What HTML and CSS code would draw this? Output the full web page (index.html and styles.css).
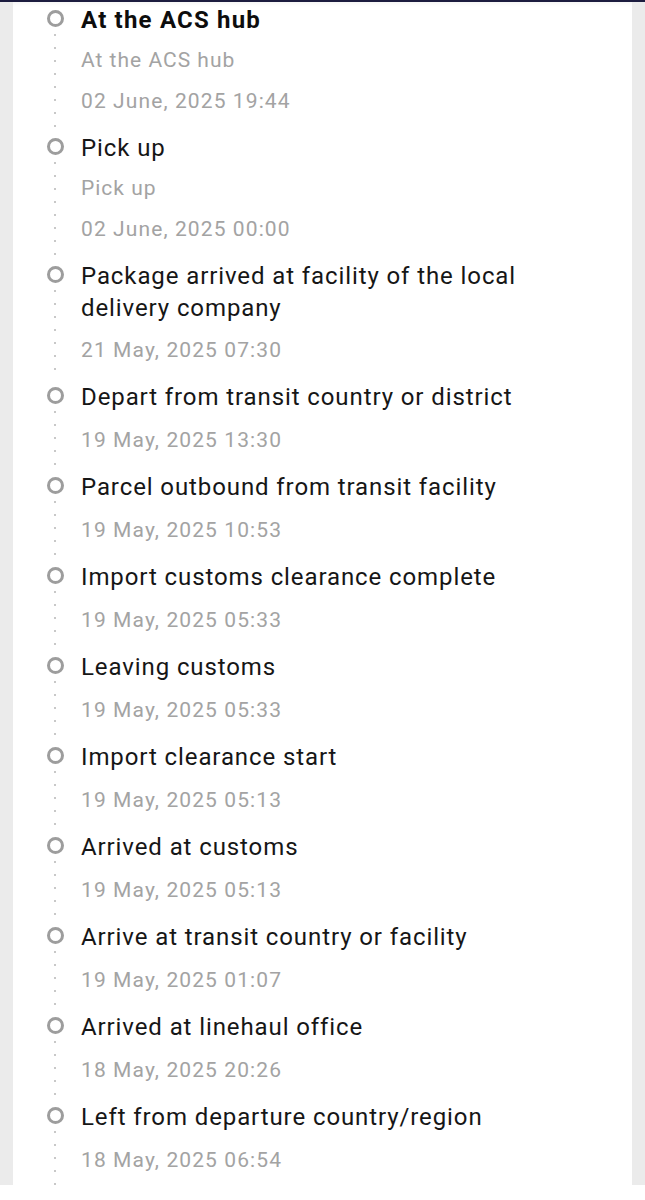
FILE: index.html
```html
<!DOCTYPE html>
<html>
<head>
<meta charset="utf-8">
<link rel="stylesheet" href="styles.css">
</head>
<body>
<div class="topbar"></div>
<div class="page">
  <div class="card">
    <ul class="timeline">
      <li class="event">
        <div class="marker"><span class="ring"></span><span class="dots"></span></div>
        <div class="body">
          <div class="title current">At the ACS hub</div>
          <div class="sub">At the ACS hub</div>
          <div class="date">02 June, 2025 19:44</div>
        </div>
      </li>
      <li class="event">
        <div class="marker"><span class="ring"></span><span class="dots"></span></div>
        <div class="body">
          <div class="title">Pick up</div>
          <div class="sub">Pick up</div>
          <div class="date">02 June, 2025 00:00</div>
        </div>
      </li>
      <li class="event">
        <div class="marker"><span class="ring"></span><span class="dots"></span></div>
        <div class="body">
          <div class="title">Package arrived at facility of the local delivery company</div>
          <div class="date after-wrap">21 May, 2025 07:30</div>
        </div>
      </li>
      <li class="event">
        <div class="marker"><span class="ring"></span><span class="dots"></span></div>
        <div class="body">
          <div class="title">Depart from transit country or district</div>
          <div class="date">19 May, 2025 13:30</div>
        </div>
      </li>
      <li class="event">
        <div class="marker"><span class="ring"></span><span class="dots"></span></div>
        <div class="body">
          <div class="title">Parcel outbound from transit facility</div>
          <div class="date">19 May, 2025 10:53</div>
        </div>
      </li>
      <li class="event">
        <div class="marker"><span class="ring"></span><span class="dots"></span></div>
        <div class="body">
          <div class="title">Import customs clearance complete</div>
          <div class="date">19 May, 2025 05:33</div>
        </div>
      </li>
      <li class="event">
        <div class="marker"><span class="ring"></span><span class="dots"></span></div>
        <div class="body">
          <div class="title">Leaving customs</div>
          <div class="date">19 May, 2025 05:33</div>
        </div>
      </li>
      <li class="event">
        <div class="marker"><span class="ring"></span><span class="dots"></span></div>
        <div class="body">
          <div class="title">Import clearance start</div>
          <div class="date">19 May, 2025 05:13</div>
        </div>
      </li>
      <li class="event">
        <div class="marker"><span class="ring"></span><span class="dots"></span></div>
        <div class="body">
          <div class="title">Arrived at customs</div>
          <div class="date">19 May, 2025 05:13</div>
        </div>
      </li>
      <li class="event">
        <div class="marker"><span class="ring"></span><span class="dots"></span></div>
        <div class="body">
          <div class="title">Arrive at transit country or facility</div>
          <div class="date">19 May, 2025 01:07</div>
        </div>
      </li>
      <li class="event">
        <div class="marker"><span class="ring"></span><span class="dots"></span></div>
        <div class="body">
          <div class="title">Arrived at linehaul office</div>
          <div class="date">18 May, 2025 20:26</div>
        </div>
      </li>
      <li class="event">
        <div class="marker"><span class="ring"></span><span class="dots"></span></div>
        <div class="body">
          <div class="title">Left from departure country/region</div>
          <div class="date">18 May, 2025 06:54</div>
        </div>
      </li>
    </ul>
  </div>
</div>
<div class="footer"></div>
</body>
</html>
```
FILE: styles.css
```css
html, body {
  margin: 0;
  padding: 0;
  background: #ffffff;
}
body {
  font-family: Roboto, "Noto Sans", "Liberation Sans", sans-serif;
  width: 645px;
  height: 1200px;
  overflow: hidden;
}
.topbar {
  height: 2px;
  background: #1c1c3f;
}
.page {
  background: #ebebeb;
  padding: 0 13px;
  height: 1183px;
}
.card {
  background: #ffffff;
  height: 1183px;
  overflow: hidden;
  box-shadow: inset 0 5px 5px -4px rgba(0,0,0,0.06);
}
.timeline {
  list-style: none;
  margin: 0;
  padding: 2px 0 0 0;
}
.event {
  display: flex;
  padding-bottom: 15px;
}
.marker {
  width: 68px;
  padding-left: 34px;
  box-sizing: border-box;
  display: flex;
  flex-direction: column;
  align-items: flex-start;
  flex-shrink: 0;
  margin-bottom: -15px;
}
.ring {
  width: 17px;
  height: 17px;
  box-sizing: border-box;
  border: 3px solid #9d9d9d;
  border-radius: 50%;
  margin-top: 6px;
  flex-shrink: 0;
}
.dots {
  flex: 1;
  width: 2px;
  margin-left: 7px;
  margin-top: 7px;
  background-image: linear-gradient(#c8c8c8 2px, transparent 2px);
  background-size: 2px 13px;
  background-repeat: repeat-y;
}
.body {
  flex: 1;
  min-width: 0;
  padding-right: 40px;
}
.title {
  font-size: 24px;
  line-height: 32px;
  letter-spacing: 0.9px;
  color: #161616;
  font-weight: 400;
}
.title.current {
  font-weight: 700;
  color: #0d0d0d;
  letter-spacing: 1.2px;
}
.sub {
  font-size: 21px;
  line-height: 32px;
  letter-spacing: 1px;
  color: #a3a3a3;
  margin-top: 8px;
}
.date {
  font-size: 21px;
  line-height: 32px;
  letter-spacing: 1.1px;
  color: #a3a3a3;
  margin-top: 11px;
}
.sub + .date {
  margin-top: 9px;
}
.date.after-wrap {
  margin-top: 10px;
}
.footer {
  height: 15px;
  background: #ffffff;
}
```
